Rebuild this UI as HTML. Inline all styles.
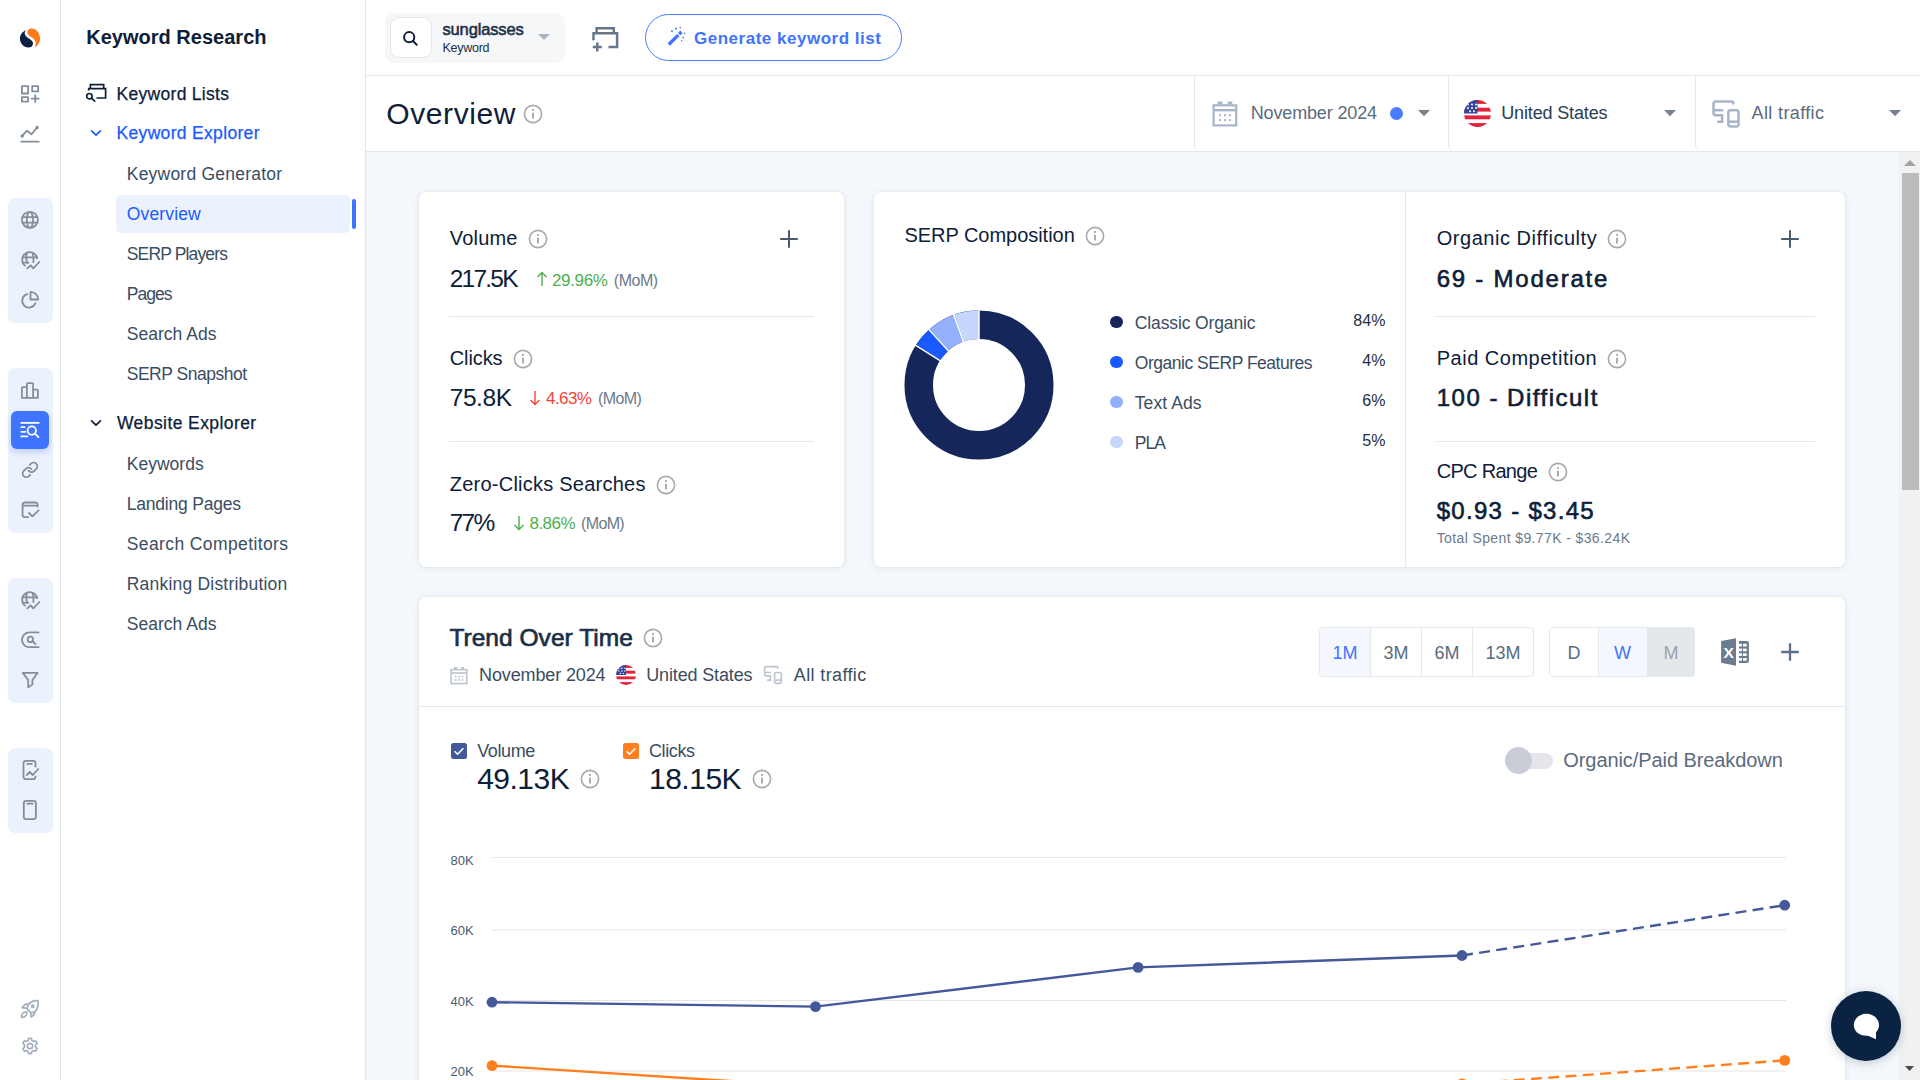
<!DOCTYPE html>
<html lang="en">
<head>
<meta charset="utf-8">
<title>Keyword Research - Overview</title>
<style>
html,body{margin:0;padding:0;}
body{width:1920px;height:1080px;overflow:hidden;background:#fff;font-family:"Liberation Sans",sans-serif;color:#0e2038;}
#app{position:relative;width:1920px;height:1080px;overflow:hidden;}
.abs{position:absolute;}
.t{position:absolute;white-space:pre;}
svg{position:absolute;overflow:visible;}
.ic{fill:none;stroke:#838e9c;stroke-width:1.8;stroke-linecap:round;stroke-linejoin:round;}
.grp{position:absolute;left:8px;width:45px;background:#ecf1fe;border-radius:7px;}
.card{position:absolute;background:#fff;border-radius:7px;box-shadow:0 1px 6px rgba(120,140,170,.17),0 0 2px rgba(120,140,170,.10);}
.hr{position:absolute;height:1px;background:#e5e8ec;}
.vr{position:absolute;width:1px;background:#e5e8ec;}
</style>
</head>
<body>
<div id="app">
<div class="abs" style="left:366px;top:152px;width:1554px;height:928px;background:#f4f8fc;"></div>
<!-- icon rail -->
<div class="abs" style="left:0;top:0;width:60px;height:1080px;background:#fff;"></div>
<div class="vr" style="left:60px;top:0;height:1080px;background:#e3e6ea;"></div>
<svg style="left:19px;top:27px" width="22" height="22" viewBox="0 0 22 22">
  <path d="M6.850 3.150C3.300 4.600.900 7.800.900 11.600.900 16.600 4.800 20.500 9.300 20.500 12.200 20.500 14 18.700 14 16.400 14 14.300 12.600 13.400 10.600 12 8.300 10.400 5.700 8.800 5.700 6.200 5.700 5 6.100 3.900 6.850 3.150Z" fill="#0a2240"/>
  <path d="M12.500 1.400C10 1.400 8.300 3 8.300 5.200 8.300 7.400 10 8.600 12.200 10.100 14.600 11.800 16.700 13.300 16.700 16.400 16.700 17.900 16.300 19.300 15.600 20.500 18.900 18.900 21.100 15.500 21.100 11.600 21.100 6 17.200 1.400 12.500 1.400Z" fill="#ff7a1a"/>
</svg>
<!-- dashboard+ -->
<svg style="left:18px;top:82px" width="24" height="24" viewBox="0 0 24 24"><g class="ic">
  <rect x="3.900" y="4.200" width="6.200" height="7.300"/><rect x="14.200" y="4.200" width="6" height="5.200"/><rect x="3.900" y="15.200" width="6.200" height="4.400"/>
  <path d="M17.200 13.100v7M13.700 16.600h7"/></g></svg>
<!-- chart line -->
<svg style="left:18px;top:121px" width="24" height="24" viewBox="0 0 24 24"><g class="ic">
  <path d="M4.200 14.900l4.800-5.300 4.500 3.700 5.500-6.700M3.200 20.700h17.600"/><circle cx="4.200" cy="15" r=".8" fill="#838e9c"/><circle cx="19.200" cy="6.500" r=".8" fill="#838e9c"/></g></svg>

<div class="grp" style="top:198px;height:125px;"></div>
<!-- globe -->
<svg style="left:18px;top:208px" width="24" height="24" viewBox="0 0 24 24"><g class="ic">
  <circle cx="11.900" cy="11.850" r="8"/><ellipse cx="11.900" cy="11.850" rx="3.100" ry="8"/><path d="M4.400 9.150h15M4.400 14.550h15"/></g></svg>
<!-- globe trend -->
<svg style="left:18px;top:248px" width="24" height="24" viewBox="0 0 24 24"><g class="ic">
  <path d="M19.200 10.200A7.600 7.600 0 1 0 6.900 17.600"/><path d="M8.900 4.900c-.5 1.800-.7 4-.5 6 .1 1.600.4 3 .9 4.300M14.600 4.900c.5 1.500.8 3.200.8 5v4.300M4.500 9.300h14.600M4.700 14.700h5.600"/>
  <path d="M9.300 20.300l3.400-3 2.600 3 6-6.300"/></g></svg>
<!-- pie -->
<svg style="left:18px;top:288px" width="24" height="24" viewBox="0 0 24 24"><g class="ic">
  <path d="M9.300 6.200A6.800 6.800 0 1 0 17.400 15.200"/><path d="M12.500 3.800v7.700h7.700a7.700 7.700 0 0 0-7.700-7.700z"/></g></svg>

<div class="grp" style="top:368px;height:165px;"></div>
<!-- bars -->
<svg style="left:18px;top:378px" width="24" height="24" viewBox="0 0 24 24"><g class="ic">
  <path d="M3.900 19.800V9.900a.8.800 0 0 1 .8-.8h4.200M8.900 19.800V5.900a.8.800 0 0 1 .8-.8h4.600a.8.800 0 0 1 .8.800v13.900M15.100 11.600h4a.8.800 0 0 1 .8.800v7.400H3.900"/></g></svg>
<!-- active -->
<div class="abs" style="left:11px;top:411px;width:38px;height:38px;border-radius:6px;background:#3e74fe;box-shadow:0 3px 6px rgba(62,116,254,.28);"></div>
<svg style="left:18px;top:418px" width="24" height="24" viewBox="0 0 24 24"><g class="ic" style="stroke:#fff;stroke-width:1.800">
  <path d="M3.300 4.900h17.400M3.300 9.200h3.200M3.300 13.800h4M3.300 18.400h6"/><circle cx="13.800" cy="12.600" r="4.200"/><path d="M16.900 15.700l3.600 3.400"/></g></svg>
<!-- link -->
<svg style="left:18px;top:458px" width="24" height="24" viewBox="0 0 24 24"><g class="ic" style="stroke-width:2.450" transform="translate(12 11.900) scale(.735) translate(-12 -12)">
  <path d="M10 13a5 5 0 0 0 7.540.540l3-3a5 5 0 0 0-7.070-7.070l-1.720 1.710"/><path d="M14 11a5 5 0 0 0-7.540-.540l-3 3a5 5 0 0 0 7.070 7.070l1.710-1.710"/></g></svg>
<!-- calendar check -->
<svg style="left:18px;top:498px" width="24" height="24" viewBox="0 0 24 24"><g class="ic">
  <path d="M10.200 19.200H7a2.400 2.400 0 0 1-2.400-2.400V6.900A2.400 2.400 0 0 1 7 4.500h10.200a2.400 2.400 0 0 1 2.400 2.400v1.700M4.600 7.700h15"/><path d="M11 15l3.300 3.300 6.400-6"/></g></svg>

<div class="grp" style="top:578px;height:125px;"></div>
<!-- globe trend 2 -->
<svg style="left:18px;top:588px" width="24" height="24" viewBox="0 0 24 24"><g class="ic">
  <path d="M19.200 10.200A7.600 7.600 0 1 0 6.900 17.600"/><path d="M8.900 4.900c-.5 1.800-.7 4-.5 6 .1 1.600.4 3 .9 4.300M14.600 4.900c.5 1.500.8 3.200.8 5v4.300M4.500 9.300h14.600M4.700 14.700h5.600"/>
  <path d="M9.300 20.300l3.400-3 2.600 3 6-6.300"/></g></svg>
<!-- at-search -->
<svg style="left:18px;top:628px" width="24" height="24" viewBox="0 0 24 24"><g class="ic">
  <path d="M20.600 4.400h-9.200a7.400 7.400 0 0 0 0 14.800h9.200"/><circle cx="12.400" cy="11.400" r="2.700"/><path d="M14.500 13.400l3.100 2.600"/></g></svg>
<!-- funnel -->
<svg style="left:18px;top:668px" width="24" height="24" viewBox="0 0 24 24"><g class="ic">
  <path d="M4.800 4.900h14.800l-5.200 7.100v4.500l-4.200 2.700V12z"/></g></svg>

<div class="grp" style="top:748px;height:85px;"></div>
<!-- doc chart -->
<svg style="left:18px;top:758px" width="24" height="24" viewBox="0 0 24 24"><g class="ic">
  <path d="M17.500 8.600V5.200a2.400 2.400 0 0 0-2.400-2.400H7.900a2.400 2.400 0 0 0-2.400 2.400v13.600a2.400 2.400 0 0 0 2.400 2.400h7.200a2.400 2.400 0 0 0 2.400-2.400v-.4M9.200 5.900h4.600"/><path d="M8.700 17l3-3 3 3 5.600-6"/></g></svg>
<!-- phone -->
<svg style="left:18px;top:798px" width="24" height="24" viewBox="0 0 24 24"><g class="ic">
  <rect x="5.800" y="2.800" width="12.100" height="18.400" rx="2.400"/><path d="M9.300 5.700h5.400"/></g></svg>
<!-- rocket -->
<svg style="left:18px;top:996px" width="24" height="24" viewBox="0 0 24 24"><g class="ic" style="stroke:#a5afbd;stroke-width:1.700">
  <path d="M20 4.700C16.500 4.500 13 5.600 11 7.600 9.900 8.900 9.300 11 9 12.600L13 16.900C14.700 16.600 16.700 15.900 18 14.800 19.600 12.600 20.300 8.500 20 4.700Z"/>
  <path d="M11 8.400L7.500 8 4.200 11.600 9 12.400M16.300 15.500L16.700 18 13.200 21 12.600 16.800"/>
  <path d="M8.800 16.200C7 16 5 16.800 4.400 17.600 3.600 18.800 3.400 20.400 3.400 21.300 4.500 21.300 6.200 21 7.400 20.200 8.300 19.500 9 18 8.800 16.200Z"/><circle cx="14.700" cy="10.200" r="1.100"/></g></svg>
<!-- gear -->
<svg style="left:20px;top:1036px" width="20" height="20" viewBox="0 0 24 24"><g class="ic" style="stroke:#a5afbd;stroke-width:2">
  <circle cx="12" cy="12" r="3.200"/><path d="M10.300 2.800h3.400l.6 2.700 2 1.100 2.600-.8 1.700 2.900-2 1.900v2.800l2 1.900-1.700 2.900-2.600-.8-2 1.100-.6 2.700h-3.400l-.6-2.700-2-1.100-2.600.8-1.700-2.900 2-1.900v-2.800l-2-1.900 1.700-2.900 2.600.8 2-1.100z"/></g></svg>
<!-- secondary sidebar -->
<div class="abs" style="left:61px;top:0;width:304px;height:1080px;background:#fff;"></div>
<div class="vr" style="left:365px;top:0;height:1080px;background:#e3e6ea;"></div>
<!-- keyword lists icon -->
<svg style="left:84px;top:82px" width="24" height="24" viewBox="0 0 24 24"><g class="ic" style="stroke:#0e2038;stroke-width:1.700;stroke-linecap:butt;stroke-linejoin:miter">
  <path d="M6.400 6.700V2.600h13.300v4.100M4.700 8.400V6.700h16.900v9.300h-9.100"/><circle cx="5.400" cy="14.200" r="2.700"/><path d="M7.400 16.200l3.300 3" style="stroke-linecap:round"/></g></svg>
<!-- chevrons -->
<svg style="left:90px;top:128px" width="12" height="10" viewBox="0 0 12 10"><path d="M1.600 2.900l4.400 4.300 4.400-4.300" fill="none" stroke="#195afe" stroke-width="1.700" stroke-linecap="round" stroke-linejoin="round"/></svg>
<svg style="left:90px;top:418px" width="12" height="10" viewBox="0 0 12 10"><path d="M1.600 2.900l4.400 4.300 4.400-4.300" fill="none" stroke="#0e2038" stroke-width="1.700" stroke-linecap="round" stroke-linejoin="round"/></svg>
<!-- active item -->
<div class="abs" style="left:116px;top:195px;width:234px;height:38px;border-radius:5px;background:#ecf1fe;"></div>
<div class="abs" style="left:352px;top:199px;width:4px;height:30px;border-radius:2px;background:#3e74fe;"></div>
<!-- top bar -->
<div class="abs" style="left:366px;top:0;width:1554px;height:75px;background:#fff;"></div>
<div class="hr" style="left:366px;top:75px;width:1554px;background:#e3e6ea;"></div>
<div class="abs" style="left:385px;top:13px;width:180px;height:50px;border-radius:9px;background:#f6f7f8;"></div>
<div class="abs" style="left:390px;top:17px;width:40px;height:39px;border-radius:9px;background:#fff;border:1px solid #e3e6ea;"></div>
<svg style="left:397px;top:25px" width="26" height="26" viewBox="0 0 26 26"><g fill="none" stroke="#0e2038" stroke-width="2" stroke-linecap="round"><circle cx="12.200" cy="12.200" r="5.100"/><path d="M16 16l3.700 3.700"/></g></svg>
<svg style="left:538px;top:33.500px" width="12" height="7" viewBox="0 0 12 7"><path d="M0 0h12l-6 6z" fill="#aab2bd"/></svg>
<!-- add list icon -->
<svg style="left:591px;top:25px" width="28" height="28" viewBox="0 0 28 28"><g fill="none" stroke="#66778a" stroke-width="2.500">
  <path d="M5.600 8.200V3.200h17.200v5M2.500 15.200v-7h23.600v13.900h-8.600"/><path d="M6.300 17.600v9M1.800 22.100h9"/></g></svg>
<!-- generate button -->
<div class="abs" style="left:645px;top:14px;width:255px;height:45px;border-radius:24px;border:1px solid #4a7cfe;background:#fff;"></div>
<svg style="left:666px;top:26px" width="20" height="20" viewBox="0 0 20 20"><g fill="#3e74fe">
  <path d="M1.600 17.300l9.400-9.400 2.400 2.400-9.400 9.400z"/><path d="M12 6.900l2.300-2.300 2.400 2.400-2.300 2.300z"/>
  <circle cx="10" cy="2.800" r="1"/><circle cx="6" cy="5" r=".9"/><circle cx="14.200" cy="1.600" r=".8"/><circle cx="17.200" cy="11.600" r=".9"/><circle cx="18.600" cy="7.400" r=".8"/><circle cx="15.600" cy="14.800" r=".7"/></g></svg>
<!-- page header -->
<div class="abs" style="left:366px;top:76px;width:1554px;height:75px;background:#fff;"></div>
<div class="hr" style="left:366px;top:151px;width:1554px;background:#e3e6ea;"></div>
<svg style="left:523.05px;top:104.40px" width="20" height="20" viewBox="0 0 20 20"><circle cx="10" cy="10" r="8.600" fill="none" stroke="#a9a9a9" stroke-width="1.600"/><rect x="9.050" y="5" width="1.900" height="1.900" fill="#a9a9a9"/><rect x="9.050" y="8.700" width="1.900" height="5.800" fill="#a9a9a9"/></svg>
<!-- selectors -->
<div class="abs" style="left:1194px;top:70px;width:260px;height:81px;border-left:1px solid #e6e9ec;border-bottom-left-radius:6px;"></div>
<div class="abs" style="left:1448px;top:70px;width:260px;height:81px;border-left:1px solid #e6e9ec;border-bottom-left-radius:6px;background:#fff;"></div>
<div class="abs" style="left:1695px;top:70px;width:225px;height:81px;border-left:1px solid #e6e9ec;border-bottom-left-radius:6px;background:#fff;"></div>
<div class="abs" style="left:1190px;top:60px;width:730px;height:15px;background:#fff;"></div>
<div class="hr" style="left:1190px;top:75px;width:730px;background:#e3e6ea;"></div>
<!-- calendar -->
<svg style="left:1212px;top:100px" width="26" height="27" viewBox="0 0 26 27"><g fill="none" stroke="#a9b5c7">
  <rect x="1.600" y="5.300" width="22.600" height="20.100" stroke-width="2.200"/><path d="M1.600 10.200h22.600" stroke-width="2.400"/></g><g fill="#a9b5c7"><rect x="5.700" y="1.500" width="4.600" height="3"/><rect x="15.700" y="1.500" width="4.600" height="3"/>
  <rect x="7" y="14.200" width="2" height="2"/><rect x="12" y="14.200" width="2" height="2"/><rect x="17" y="14.200" width="2" height="2"/>
  <rect x="7" y="19.100" width="2" height="2"/><rect x="12" y="19.100" width="2" height="2"/><rect x="17" y="19.100" width="2" height="2"/></g></svg>
<div class="abs" style="left:1389.700px;top:106.500px;width:13px;height:13px;border-radius:50%;background:#4a7cfe;"></div>
<svg style="left:1417.500px;top:110px" width="12" height="7" viewBox="0 0 12 7"><path d="M0 0h12l-6 6.200z" fill="#768292"/></svg>
<svg style="left:1664px;top:110px" width="12" height="7" viewBox="0 0 12 7"><path d="M0 0h12l-6 6.200z" fill="#768292"/></svg>
<svg style="left:1889px;top:110px" width="12" height="7" viewBox="0 0 12 7"><path d="M0 0h12l-6 6.200z" fill="#768292"/></svg>
<!-- flag -->
<svg style="left:1464px;top:100px" width="27" height="27" viewBox="0 0 27 27"><defs><clipPath id="fc"><circle cx="13.500" cy="13.500" r="13.500"/></clipPath></defs>
  <g clip-path="url(#fc)"><rect width="27" height="27" fill="#fff"/><rect y="0" width="27" height="3.900" fill="#e3233c"/><rect y="7.700" width="27" height="3.900" fill="#e3233c"/><rect y="15.400" width="27" height="3.900" fill="#e3233c"/><rect y="23.100" width="27" height="3.900" fill="#e3233c"/>
  <rect width="13.500" height="13.500" fill="#31479e"/><g fill="#fff"><circle cx="4" cy="4.500" r="1"/><circle cx="8" cy="4.500" r="1"/><circle cx="12" cy="4.500" r="1"/><circle cx="4" cy="8" r="1"/><circle cx="8" cy="8" r="1"/><circle cx="12" cy="8" r="1"/><circle cx="6" cy="11.300" r="1"/><circle cx="10" cy="11.300" r="1"/></g></g></svg>
<!-- devices -->
<svg style="left:1711px;top:99px" width="30" height="30" viewBox="0 0 30 30"><g fill="none" stroke="#a9b5c7" stroke-width="2.500">
  <path d="M22.300 5.600V3.900a1.400 1.400 0 0 0-1.400-1.400H4.700a2.200 2.200 0 0 0-2.200 2.200V14a2.200 2.200 0 0 0 2.200 2.200h6.400v6.500H6.300M2.500 11.200h9.600"/>
  <rect x="17.350" y="11.250" width="10.200" height="16.200" rx="2.200"/><path d="M17.350 22.700h10.200"/></g></svg>
<!-- card 1 -->
<div class="card" style="left:419px;top:192px;width:425px;height:375px;"></div>
<svg style="left:527.90px;top:229.30px" width="20" height="20" viewBox="0 0 20 20"><circle cx="10" cy="10" r="8.600" fill="none" stroke="#a9a9a9" stroke-width="1.600"/><rect x="9.050" y="5" width="1.900" height="1.900" fill="#a9a9a9"/><rect x="9.050" y="8.700" width="1.900" height="5.800" fill="#a9a9a9"/></svg>
<svg style="left:779px;top:229px" width="20" height="20" viewBox="0 0 20 20"><path d="M10 1.200v17.600M1.200 10h17.600" fill="none" stroke="#4a5b70" stroke-width="2"/></svg>
<div class="hr" style="left:449px;top:316px;width:365px;"></div>
<svg style="left:513.00px;top:349.30px" width="20" height="20" viewBox="0 0 20 20"><circle cx="10" cy="10" r="8.600" fill="none" stroke="#a9a9a9" stroke-width="1.600"/><rect x="9.050" y="5" width="1.900" height="1.900" fill="#a9a9a9"/><rect x="9.050" y="8.700" width="1.900" height="5.800" fill="#a9a9a9"/></svg>
<div class="hr" style="left:449px;top:441px;width:365px;"></div>
<svg style="left:655.80px;top:475.00px" width="20" height="20" viewBox="0 0 20 20"><circle cx="10" cy="10" r="8.600" fill="none" stroke="#a9a9a9" stroke-width="1.600"/><rect x="9.050" y="5" width="1.900" height="1.900" fill="#a9a9a9"/><rect x="9.050" y="8.700" width="1.900" height="5.800" fill="#a9a9a9"/></svg>
<!-- arrows -->
<svg style="left:536px;top:271px" width="12" height="16" viewBox="0 0 12 16"><path d="M6 15V1.600M1.500 6.100L6 1.600l4.500 4.500" fill="none" stroke="#4caf50" stroke-width="1.400"/></svg>
<svg style="left:529px;top:389.500px" width="12" height="16" viewBox="0 0 12 16"><path d="M6 1v13.400M1.500 9.900L6 14.400l4.500-4.500" fill="none" stroke="#f44336" stroke-width="1.400"/></svg>
<svg style="left:513px;top:515px" width="12" height="16" viewBox="0 0 12 16"><path d="M6 1v13.400M1.500 9.900L6 14.400l4.500-4.500" fill="none" stroke="#4caf50" stroke-width="1.400"/></svg>
<!-- card 2 -->
<div class="card" style="left:874px;top:192px;width:971px;height:375px;"></div>
<div class="vr" style="left:1405px;top:192px;height:375px;"></div>
<svg style="left:1084.80px;top:226.30px" width="20" height="20" viewBox="0 0 20 20"><circle cx="10" cy="10" r="8.600" fill="none" stroke="#a9a9a9" stroke-width="1.600"/><rect x="9.050" y="5" width="1.900" height="1.900" fill="#a9a9a9"/><rect x="9.050" y="8.700" width="1.900" height="5.800" fill="#a9a9a9"/></svg>
<!-- donut -->
<svg style="left:904px;top:310px" width="150" height="150" viewBox="-75 -75 150 150">
  <g fill="none" stroke-width="28.500" transform="rotate(-90)">
    <circle r="60.250" stroke="#15265b"/>
    <circle r="60.250" stroke="#195afe" stroke-dasharray="16.800 361.760" stroke-dashoffset="-317.900"/>
    <circle r="60.250" stroke="#94b0fd" stroke-dasharray="23.200 355.360" stroke-dashoffset="-334.700"/>
    <circle r="60.250" stroke="#c5d7fd" stroke-dasharray="20.660 357.900" stroke-dashoffset="-357.900"/>
  </g>
  <g stroke="#fff" stroke-width="1.500">
    <path d="M0 -45V-76" /><path d="M0 -45V-76" transform="rotate(-58)"/><path d="M0 -45V-76" transform="rotate(-42)"/><path d="M0 -45V-76" transform="rotate(-19.700)"/>
  </g>
</svg>
<div class="abs" style="left:1110px;top:315.600px;width:12.600px;height:12.600px;border-radius:50%;background:#15265b;"></div>
<div class="abs" style="left:1110px;top:355.600px;width:12.600px;height:12.600px;border-radius:50%;background:#195afe;"></div>
<div class="abs" style="left:1110px;top:395.600px;width:12.600px;height:12.600px;border-radius:50%;background:#94b0fd;"></div>
<div class="abs" style="left:1110px;top:435.600px;width:12.600px;height:12.600px;border-radius:50%;background:#c5d7fd;"></div>
<!-- right column -->
<svg style="left:1606.70px;top:229.30px" width="20" height="20" viewBox="0 0 20 20"><circle cx="10" cy="10" r="8.600" fill="none" stroke="#a9a9a9" stroke-width="1.600"/><rect x="9.050" y="5" width="1.900" height="1.900" fill="#a9a9a9"/><rect x="9.050" y="8.700" width="1.900" height="5.800" fill="#a9a9a9"/></svg>
<svg style="left:1780px;top:229px" width="20" height="20" viewBox="0 0 20 20"><path d="M10 1.200v17.600M1.200 10h17.600" fill="none" stroke="#4a5b70" stroke-width="2"/></svg>
<div class="hr" style="left:1436px;top:316px;width:379px;"></div>
<svg style="left:1606.70px;top:349.30px" width="20" height="20" viewBox="0 0 20 20"><circle cx="10" cy="10" r="8.600" fill="none" stroke="#a9a9a9" stroke-width="1.600"/><rect x="9.050" y="5" width="1.900" height="1.900" fill="#a9a9a9"/><rect x="9.050" y="8.700" width="1.900" height="5.800" fill="#a9a9a9"/></svg>
<div class="hr" style="left:1436px;top:441px;width:379px;"></div>
<svg style="left:1547.80px;top:462.20px" width="20" height="20" viewBox="0 0 20 20"><circle cx="10" cy="10" r="8.600" fill="none" stroke="#a9a9a9" stroke-width="1.600"/><rect x="9.050" y="5" width="1.900" height="1.900" fill="#a9a9a9"/><rect x="9.050" y="8.700" width="1.900" height="5.800" fill="#a9a9a9"/></svg>
<!-- trend card -->
<div class="card" style="left:419px;top:597px;width:1426px;height:520px;"></div>
<svg style="left:643.00px;top:628.40px" width="20" height="20" viewBox="0 0 20 20"><circle cx="10" cy="10" r="8.600" fill="none" stroke="#a9a9a9" stroke-width="1.600"/><rect x="9.050" y="5" width="1.900" height="1.900" fill="#a9a9a9"/><rect x="9.050" y="8.700" width="1.900" height="5.800" fill="#a9a9a9"/></svg>
<div class="hr" style="left:419px;top:706px;width:1426px;background:#e6e9ec;"></div>
<!-- small calendar -->
<svg style="left:450px;top:665.600px" width="18" height="18.700" viewBox="0 0 26 27"><g fill="none" stroke="#bcc4d0">
  <rect x="1.600" y="5.300" width="22.600" height="20.100" stroke-width="2.300"/><path d="M1.600 10.200h22.600" stroke-width="2.400"/></g><g fill="#bcc4d0"><rect x="5.700" y="1.500" width="4.600" height="3"/><rect x="15.700" y="1.500" width="4.600" height="3"/>
  <rect x="6.800" y="14" width="2.500" height="2.500"/><rect x="11.800" y="14" width="2.500" height="2.500"/><rect x="16.800" y="14" width="2.500" height="2.500"/>
  <rect x="6.800" y="18.900" width="2.500" height="2.500"/><rect x="11.800" y="18.900" width="2.500" height="2.500"/><rect x="16.800" y="18.900" width="2.500" height="2.500"/></g></svg>
<!-- small flag -->
<svg style="left:616px;top:664.700px" width="20" height="20" viewBox="0 0 27 27"><g clip-path="url(#fc)"><rect width="27" height="27" fill="#fff"/><rect y="0" width="27" height="3.900" fill="#e3233c"/><rect y="7.700" width="27" height="3.900" fill="#e3233c"/><rect y="15.400" width="27" height="3.900" fill="#e3233c"/><rect y="23.100" width="27" height="3.900" fill="#e3233c"/>
  <rect width="13.500" height="13.500" fill="#31479e"/><g fill="#fff"><circle cx="4" cy="4.500" r="1"/><circle cx="8" cy="4.500" r="1"/><circle cx="12" cy="4.500" r="1"/><circle cx="4" cy="8" r="1"/><circle cx="8" cy="8" r="1"/><circle cx="12" cy="8" r="1"/><circle cx="6" cy="11.300" r="1"/><circle cx="10" cy="11.300" r="1"/></g></g></svg>
<!-- small devices -->
<svg style="left:763px;top:665px" width="20" height="20" viewBox="0 0 30 30"><g fill="none" stroke="#bcc4d0" stroke-width="2.500">
  <path d="M22.300 5.600V3.900a1.400 1.400 0 0 0-1.400-1.400H4.700a2.200 2.200 0 0 0-2.200 2.200V14a2.200 2.200 0 0 0 2.200 2.200h6.400v6.500H6.300M2.500 11.200h9.600"/>
  <rect x="17.350" y="11.250" width="10.200" height="16.200" rx="2.200"/><path d="M17.350 22.700h10.200"/></g></svg>
<!-- period buttons -->
<div class="abs" style="left:1319px;top:627px;width:215px;height:50px;border:1px solid #e6e9ec;border-radius:4px;box-sizing:border-box;background:#fff;"></div>
<div class="abs" style="left:1320px;top:628px;width:50px;height:48px;background:#f4f7fd;border-radius:3px 0 0 3px;"></div>
<div class="vr" style="left:1370px;top:628px;height:48px;background:#e6e9ec;"></div>
<div class="vr" style="left:1421px;top:628px;height:48px;background:#e6e9ec;"></div>
<div class="vr" style="left:1472px;top:628px;height:48px;background:#e6e9ec;"></div>
<div class="abs" style="left:1549px;top:627px;width:146px;height:50px;border:1px solid #e6e9ec;border-radius:4px;box-sizing:border-box;background:#fff;"></div>
<div class="vr" style="left:1598px;top:628px;height:48px;background:#e6e9ec;"></div>
<div class="abs" style="left:1599px;top:628px;width:48px;height:48px;background:#f4f7fd;"></div>
<div class="abs" style="left:1647px;top:627px;width:48px;height:50px;background:#e5e8eb;border-radius:0 4px 4px 0;"></div>
<!-- excel -->
<svg style="left:1720px;top:637px" width="30" height="30" viewBox="0 0 30 30"><g fill="#6b7c90">
  <path d="M1.100 3.900L16 1.300v27.400L1.100 25.800z"/>
  <path d="M18.900 3.900h8a2 2 0 0 1 2 2v18a2 2 0 0 1-2 2h-8v-2.200h3v-2.600h-3v-2.100h3v-2.700h-3v-2h3v-2.700h-3v-2.100h3V6.800h-3z"/></g>
  <g fill="#fff"><rect x="23" y="6.800" width="3.700" height="2.700"/><rect x="23" y="11.600" width="3.700" height="2.700"/><rect x="23" y="16.300" width="3.700" height="2.700"/><rect x="23" y="21.100" width="3.700" height="2.600"/></g>
  <text x="8.600" y="21.200" text-anchor="middle" font-family="Liberation Sans, sans-serif" font-weight="700" font-size="15.500" fill="#fff">X</text></svg>
<svg style="left:1780px;top:642px" width="20" height="20" viewBox="0 0 20 20"><path d="M10 1.200v17.600M1.200 10h17.600" fill="none" stroke="#5e7085" stroke-width="2.300"/></svg>
<!-- checkboxes -->
<div class="abs" style="left:451px;top:743px;width:16px;height:16px;border-radius:2.500px;background:#45589a;"></div>
<svg style="left:451px;top:743px" width="16" height="16" viewBox="0 0 16 16"><path d="M3.600 8.200l3 3 5.800-6" fill="none" stroke="#fff" stroke-width="1.600"/></svg>
<div class="abs" style="left:623px;top:743px;width:16px;height:16px;border-radius:2.500px;background:#ff7f1f;"></div>
<svg style="left:623px;top:743px" width="16" height="16" viewBox="0 0 16 16"><path d="M3.600 8.200l3 3 5.800-6" fill="none" stroke="#fff" stroke-width="1.600"/></svg>
<svg style="left:580.00px;top:769.40px" width="20" height="20" viewBox="0 0 20 20"><circle cx="10" cy="10" r="8.600" fill="none" stroke="#a9a9a9" stroke-width="1.600"/><rect x="9.050" y="5" width="1.900" height="1.900" fill="#a9a9a9"/><rect x="9.050" y="8.700" width="1.900" height="5.800" fill="#a9a9a9"/></svg>
<svg style="left:752.00px;top:769.40px" width="20" height="20" viewBox="0 0 20 20"><circle cx="10" cy="10" r="8.600" fill="none" stroke="#a9a9a9" stroke-width="1.600"/><rect x="9.050" y="5" width="1.900" height="1.900" fill="#a9a9a9"/><rect x="9.050" y="8.700" width="1.900" height="5.800" fill="#a9a9a9"/></svg>
<!-- toggle -->
<div class="abs" style="left:1512px;top:753px;width:41px;height:16px;border-radius:8px;background:#e4e6ea;"></div>
<div class="abs" style="left:1504.500px;top:747.300px;width:27px;height:27px;border-radius:50%;background:#c9cdd6;"></div>
<!-- chart -->
<svg style="left:419px;top:830px" width="1426" height="250" viewBox="419 830 1426 250">
  <g stroke="#e6e6e6" stroke-width="1.100"><path d="M492 857.500H1786M492 930H1786M492 1000.500H1786M492 1071H1786"/></g>
  <g fill="none" stroke-width="2.400">
    <path d="M492 1002.200L815.500 1006.600L1138.100 967.400L1462 955.500" stroke="#45589a"/>
    <path d="M1462 955.500L1784.700 905.200" stroke="#45589a" stroke-dasharray="11 6.300"/>
    <path d="M492 1065.600L815.500 1086.500L1138.100 1094L1462 1084" stroke="#ff7f1f"/>
    <path d="M1462 1084L1784.700 1060.400" stroke="#ff7f1f" stroke-dasharray="11 6.300"/>
  </g>
  <g fill="#45589a"><circle cx="492" cy="1002.200" r="5.400"/><circle cx="815.500" cy="1006.600" r="5.400"/><circle cx="1138.100" cy="967.400" r="5.400"/><circle cx="1462" cy="955.500" r="5.400"/><circle cx="1784.700" cy="905.200" r="5.400"/></g>
  <g fill="#ff7f1f"><circle cx="492" cy="1065.600" r="5.400"/><circle cx="1462" cy="1084" r="5.400"/><circle cx="1784.700" cy="1060.400" r="5.400"/></g>
</svg>
<!-- right strip + scrollbar -->
<div class="abs" style="left:1899px;top:152px;width:21px;height:928px;background:#f1f1f1;"></div>
<div class="abs" style="left:1901.500px;top:173px;width:17px;height:317px;background:#bcbcbc;"></div>
<svg style="left:1904px;top:159px" width="12" height="8" viewBox="0 0 12 8"><path d="M0 7l6-6 6 6z" fill="#a3a3a3"/></svg>
<svg style="left:1905px;top:1066px" width="9" height="5" viewBox="0 0 9 5"><path d="M0 0h9l-4.500 5z" fill="#4f4548"/></svg>
<!-- chat bubble -->
<div class="abs" style="left:1831px;top:991px;width:70px;height:70px;border-radius:50%;background:#0a2342;box-shadow:0 2px 10px rgba(10,34,64,.22);"></div>
<svg style="left:1851px;top:1011px" width="30" height="30" viewBox="0 0 30 30"><path d="M15.400 2.800c7 0 12.600 5 12.600 11.200 0 3-1.200 5.400-3 7.200v7.100l-8-3.600c-.5.100-1.100.1-1.600.1C8.400 24.800 2.800 20.200 2.800 14S8.400 2.800 15.400 2.800z" fill="#fff"/></svg>
<!-- text layer -->
<span class="t" style="left:86.25px;top:27px;font-size:20px;line-height:20px;font-weight:700;letter-spacing:0.011px;">Keyword Research</span>
<span class="t" style="left:116.50px;top:86px;font-size:17.5px;line-height:17.5px;letter-spacing:0.297px;-webkit-text-stroke:0.25px #0e2038;">Keyword Lists</span>
<span class="t" style="left:116.50px;top:125px;font-size:17.5px;line-height:17.5px;color:#195afe;letter-spacing:0.325px;-webkit-text-stroke:0.25px #195afe;">Keyword Explorer</span>
<span class="t" style="left:126.75px;top:166px;font-size:17.5px;line-height:17.5px;color:#3a4d63;letter-spacing:0.219px;">Keyword Generator</span>
<span class="t" style="left:126.75px;top:206px;font-size:17.5px;line-height:17.5px;color:#195afe;letter-spacing:0.152px;">Overview</span>
<span class="t" style="left:126.75px;top:246px;font-size:17.5px;line-height:17.5px;color:#3a4d63;letter-spacing:-0.847px;">SERP Players</span>
<span class="t" style="left:126.75px;top:286px;font-size:17.5px;line-height:17.5px;color:#3a4d63;letter-spacing:-0.944px;">Pages</span>
<span class="t" style="left:126.75px;top:326px;font-size:17.5px;line-height:17.5px;color:#3a4d63;letter-spacing:0.017px;">Search Ads</span>
<span class="t" style="left:126.75px;top:366px;font-size:17.5px;line-height:17.5px;color:#3a4d63;letter-spacing:-0.492px;">SERP Snapshot</span>
<span class="t" style="left:117.00px;top:415px;font-size:17.5px;line-height:17.5px;letter-spacing:0.417px;-webkit-text-stroke:0.25px #0e2038;">Website Explorer</span>
<span class="t" style="left:126.75px;top:456px;font-size:17.5px;line-height:17.5px;color:#3a4d63;letter-spacing:0.015px;">Keywords</span>
<span class="t" style="left:126.75px;top:496px;font-size:17.5px;line-height:17.5px;color:#3a4d63;letter-spacing:-0.211px;">Landing Pages</span>
<span class="t" style="left:126.75px;top:536px;font-size:17.5px;line-height:17.5px;color:#3a4d63;letter-spacing:0.388px;">Search Competitors</span>
<span class="t" style="left:126.75px;top:576px;font-size:17.5px;line-height:17.5px;color:#3a4d63;letter-spacing:0.207px;">Ranking Distribution</span>
<span class="t" style="left:126.75px;top:616px;font-size:17.5px;line-height:17.5px;color:#3a4d63;letter-spacing:0.017px;">Search Ads</span>
<span class="t" style="left:442.50px;top:21px;font-size:16.5px;line-height:16.5px;color:#1b2f47;letter-spacing:-0.151px;-webkit-text-stroke:0.55px #1b2f47;">sunglasses</span>
<span class="t" style="left:442.50px;top:42px;font-size:12.5px;line-height:12.5px;color:#1b2f47;letter-spacing:-0.273px;">Keyword</span>
<span class="t" style="left:694.00px;top:30px;font-size:17px;line-height:17px;font-weight:700;color:#3e74fe;letter-spacing:0.511px;">Generate keyword list</span>
<span class="t" style="left:386.30px;top:99px;font-size:30px;line-height:30px;letter-spacing:0.581px;">Overview</span>
<span class="t" style="left:1250.75px;top:104px;font-size:18px;line-height:18px;color:#5b6b7d;letter-spacing:-0.152px;">November 2024</span>
<span class="t" style="left:1501.25px;top:104px;font-size:18px;line-height:18px;color:#2a3e52;letter-spacing:-0.151px;">United States</span>
<span class="t" style="left:1751.50px;top:104px;font-size:18px;line-height:18px;color:#5b6b7d;letter-spacing:0.381px;">All traffic</span>
<span class="t" style="left:449.70px;top:228px;font-size:20px;line-height:20px;letter-spacing:0.216px;">Volume</span>
<span class="t" style="left:449.70px;top:267px;font-size:24.5px;line-height:24.5px;letter-spacing:-1.751px;">217.5K</span>
<span class="t" style="left:551.90px;top:272px;font-size:17px;line-height:17px;color:#4caf50;letter-spacing:-0.334px;">29.96%</span>
<span class="t" style="left:613.80px;top:273px;font-size:16px;line-height:16px;color:#6b7a8c;letter-spacing:-0.455px;">(MoM)</span>
<span class="t" style="left:449.70px;top:348px;font-size:20px;line-height:20px;letter-spacing:-0.089px;">Clicks</span>
<span class="t" style="left:449.70px;top:386px;font-size:24.5px;line-height:24.5px;letter-spacing:-0.433px;">75.8K</span>
<span class="t" style="left:546.00px;top:390px;font-size:17px;line-height:17px;color:#f44336;letter-spacing:-0.576px;">4.63%</span>
<span class="t" style="left:598.00px;top:391px;font-size:16px;line-height:16px;color:#6b7a8c;letter-spacing:-0.605px;">(MoM)</span>
<span class="t" style="left:449.70px;top:474px;font-size:20px;line-height:20px;letter-spacing:0.244px;">Zero-Clicks Searches</span>
<span class="t" style="left:449.70px;top:511px;font-size:24.5px;line-height:24.5px;letter-spacing:-1.773px;">77%</span>
<span class="t" style="left:529.50px;top:515px;font-size:17px;line-height:17px;color:#4caf50;letter-spacing:-0.551px;">8.86%</span>
<span class="t" style="left:581.00px;top:516px;font-size:16px;line-height:16px;color:#6b7a8c;letter-spacing:-0.630px;">(MoM)</span>
<span class="t" style="left:904.40px;top:225px;font-size:20px;line-height:20px;letter-spacing:-0.029px;">SERP Composition</span>
<span class="t" style="left:1134.80px;top:315px;font-size:17.5px;line-height:17.5px;color:#3a4d63;letter-spacing:-0.125px;">Classic Organic</span>
<span class="t" style="left:1353.37px;top:313px;font-size:16px;line-height:16px;color:#1b2f47;">84%</span>
<span class="t" style="left:1134.80px;top:355px;font-size:17.5px;line-height:17.5px;color:#3a4d63;letter-spacing:-0.480px;">Organic SERP Features</span>
<span class="t" style="left:1362.28px;top:353px;font-size:16px;line-height:16px;color:#1b2f47;">4%</span>
<span class="t" style="left:1134.80px;top:395px;font-size:17.5px;line-height:17.5px;color:#3a4d63;letter-spacing:0.078px;">Text Ads</span>
<span class="t" style="left:1362.28px;top:393px;font-size:16px;line-height:16px;color:#1b2f47;">6%</span>
<span class="t" style="left:1134.80px;top:435px;font-size:17.5px;line-height:17.5px;color:#3a4d63;letter-spacing:-0.939px;">PLA</span>
<span class="t" style="left:1362.28px;top:433px;font-size:16px;line-height:16px;color:#1b2f47;">5%</span>
<span class="t" style="left:1436.70px;top:228px;font-size:20px;line-height:20px;letter-spacing:0.541px;">Organic Difficulty</span>
<span class="t" style="left:1436.70px;top:267px;font-size:24px;line-height:24px;letter-spacing:1.773px;-webkit-text-stroke:0.6px #0e2038;">69 - Moderate</span>
<span class="t" style="left:1436.70px;top:348px;font-size:20px;line-height:20px;letter-spacing:0.512px;">Paid Competition</span>
<span class="t" style="left:1436.70px;top:386px;font-size:24px;line-height:24px;letter-spacing:1.505px;-webkit-text-stroke:0.6px #0e2038;">100 - Difficult</span>
<span class="t" style="left:1436.70px;top:461px;font-size:20px;line-height:20px;letter-spacing:-0.702px;">CPC Range</span>
<span class="t" style="left:1436.70px;top:499px;font-size:24px;line-height:24px;letter-spacing:1.296px;-webkit-text-stroke:0.6px #0e2038;">$0.93 - $3.45</span>
<span class="t" style="left:1436.70px;top:531px;font-size:14px;line-height:14px;color:#6b7a8c;letter-spacing:0.384px;">Total Spent $9.77K - $36.24K</span>
<span class="t" style="left:449.40px;top:626px;font-size:24.5px;line-height:24.5px;color:#1b2f47;letter-spacing:0.036px;-webkit-text-stroke:0.7px #1b2f47;">Trend Over Time</span>
<span class="t" style="left:479.00px;top:666px;font-size:18px;line-height:18px;color:#3a4d63;letter-spacing:-0.123px;">November 2024</span>
<span class="t" style="left:646.25px;top:666px;font-size:18px;line-height:18px;color:#3a4d63;letter-spacing:-0.151px;">United States</span>
<span class="t" style="left:793.75px;top:666px;font-size:18px;line-height:18px;color:#3a4d63;letter-spacing:0.381px;">All traffic</span>
<span class="t" style="left:477.20px;top:742px;font-size:18px;line-height:18px;color:#3a4d63;letter-spacing:-0.389px;">Volume</span>
<span class="t" style="left:477.20px;top:764px;font-size:30px;line-height:30px;letter-spacing:-0.519px;">49.13K</span>
<span class="t" style="left:649.00px;top:742px;font-size:18px;line-height:18px;color:#3a4d63;letter-spacing:-0.400px;">Clicks</span>
<span class="t" style="left:649.00px;top:764px;font-size:30px;line-height:30px;letter-spacing:-0.499px;">18.15K</span>
<span class="t" style="left:1563.30px;top:750px;font-size:20px;line-height:20px;color:#5b6b7d;letter-spacing:-0.083px;">Organic/Paid Breakdown</span>
<span class="t" style="left:1345.00px;top:644px;font-size:18px;line-height:18px;color:#3e74fe;transform:translateX(-50%);">1M</span>
<span class="t" style="left:1396.00px;top:644px;font-size:18px;line-height:18px;color:#5b6b7d;transform:translateX(-50%);">3M</span>
<span class="t" style="left:1447.00px;top:644px;font-size:18px;line-height:18px;color:#5b6b7d;transform:translateX(-50%);">6M</span>
<span class="t" style="left:1503.00px;top:644px;font-size:18px;line-height:18px;color:#5b6b7d;transform:translateX(-50%);">13M</span>
<span class="t" style="left:1574.00px;top:644px;font-size:18px;line-height:18px;color:#5b6b7d;transform:translateX(-50%);">D</span>
<span class="t" style="left:1622.40px;top:644px;font-size:18px;line-height:18px;color:#3e74fe;transform:translateX(-50%);">W</span>
<span class="t" style="left:1671.00px;top:644px;font-size:18px;line-height:18px;color:#9aa3ad;transform:translateX(-50%);">M</span>
<span class="t" style="left:450.50px;top:854px;font-size:13px;line-height:13px;color:#4a5b70;letter-spacing:0.080px;">80K</span>
<span class="t" style="left:450.50px;top:924px;font-size:13px;line-height:13px;color:#4a5b70;letter-spacing:0.080px;">60K</span>
<span class="t" style="left:450.50px;top:995px;font-size:13px;line-height:13px;color:#4a5b70;letter-spacing:0.080px;">40K</span>
<span class="t" style="left:450.50px;top:1065px;font-size:13px;line-height:13px;color:#4a5b70;letter-spacing:0.080px;">20K</span>
</div>
</body>
</html>
